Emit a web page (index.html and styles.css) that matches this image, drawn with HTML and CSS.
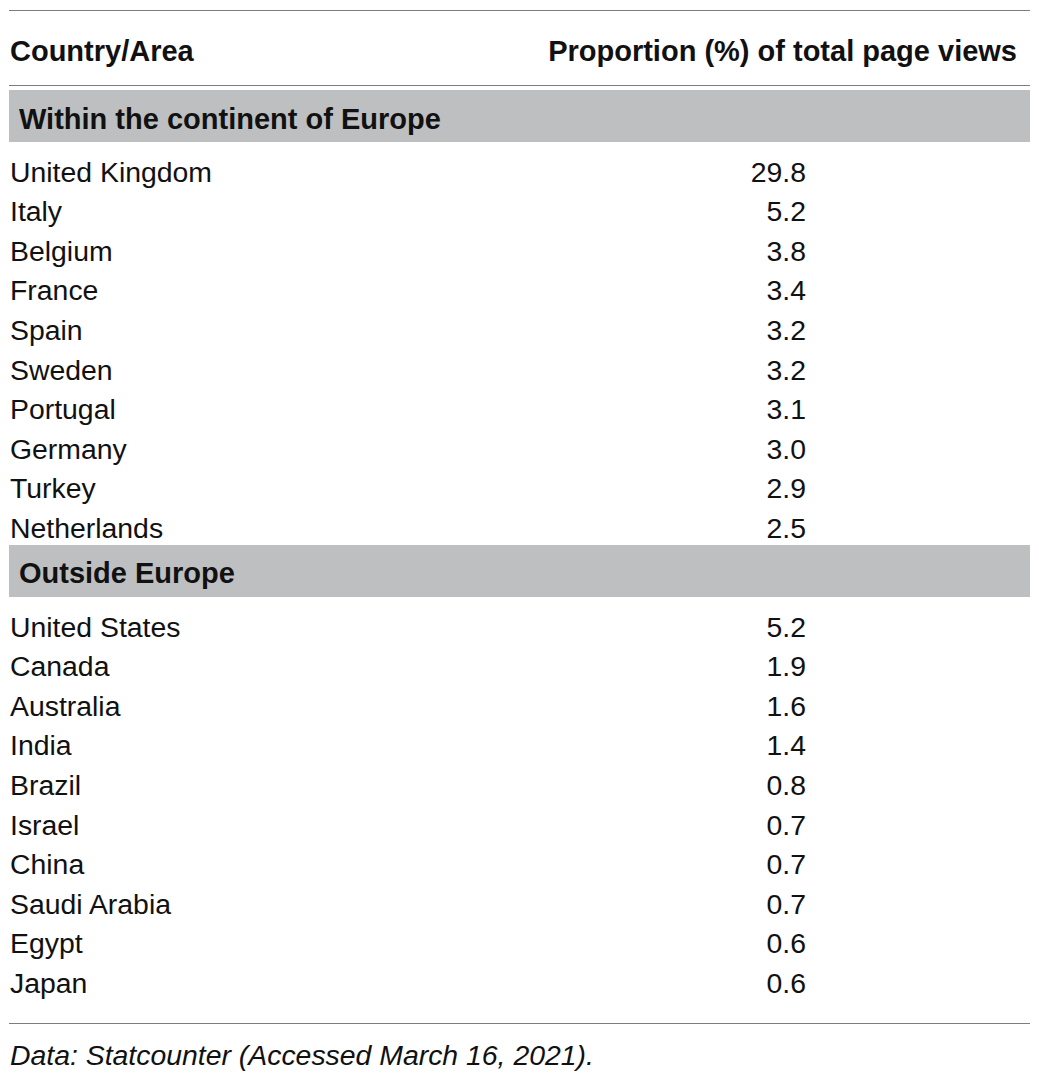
FILE: index.html
```html
<!DOCTYPE html>
<html lang="en">
<head>
<meta charset="utf-8">
<title>Page views by country</title>
<link rel="stylesheet" href="styles.css">
</head>
<body>
<div class="wrap">
  <div class="table">
    <div class="head">
      <div class="h-name">Country/Area</div>
      <div class="h-val">Proportion (%) of total page views</div>
    </div>
    <div class="band">Within the continent of Europe</div>
    <div class="group">
      <div class="row"><span class="name">United Kingdom</span><span class="val">29.8</span></div>
      <div class="row"><span class="name">Italy</span><span class="val">5.2</span></div>
      <div class="row"><span class="name">Belgium</span><span class="val">3.8</span></div>
      <div class="row"><span class="name">France</span><span class="val">3.4</span></div>
      <div class="row"><span class="name">Spain</span><span class="val">3.2</span></div>
      <div class="row"><span class="name">Sweden</span><span class="val">3.2</span></div>
      <div class="row"><span class="name">Portugal</span><span class="val">3.1</span></div>
      <div class="row"><span class="name">Germany</span><span class="val">3.0</span></div>
      <div class="row"><span class="name">Turkey</span><span class="val">2.9</span></div>
      <div class="row"><span class="name">Netherlands</span><span class="val">2.5</span></div>
    </div>
    <div class="band">Outside Europe</div>
    <div class="group last">
      <div class="row"><span class="name">United States</span><span class="val">5.2</span></div>
      <div class="row"><span class="name">Canada</span><span class="val">1.9</span></div>
      <div class="row"><span class="name">Australia</span><span class="val">1.6</span></div>
      <div class="row"><span class="name">India</span><span class="val">1.4</span></div>
      <div class="row"><span class="name">Brazil</span><span class="val">0.8</span></div>
      <div class="row"><span class="name">Israel</span><span class="val">0.7</span></div>
      <div class="row"><span class="name">China</span><span class="val">0.7</span></div>
      <div class="row"><span class="name">Saudi Arabia</span><span class="val">0.7</span></div>
      <div class="row"><span class="name">Egypt</span><span class="val">0.6</span></div>
      <div class="row"><span class="name">Japan</span><span class="val">0.6</span></div>
    </div>
  </div>
  <p class="note">Data: Statcounter (Accessed March 16, 2021).</p>
</div>
</body>
</html>
```

FILE: styles.css
```css
html, body {
  margin: 0;
  padding: 0;
  background: #ffffff;
}

body {
  font-family: "Liberation Sans", Arial, sans-serif;
  color: #111111;
  font-size: 28.4px;
}

.wrap {
  margin: 10px 9px 0 9px;
  width: 1021px;
}

.table {
  border-top: 1px solid #7d7d7d;
  border-bottom: 1px solid #7d7d7d;
}

.head {
  box-sizing: border-box;
  display: grid;
  grid-template-columns: 1fr auto;
  align-items: center;
  height: 75px;
  padding-top: 6px;
  border-bottom: 1px solid #7d7d7d;
  font-weight: bold;
  font-size: 29px;
  margin-bottom: 4px;
}

.h-name {
  padding-left: 1px;
}

.h-val {
  padding-right: 13px;
}

.band {
  box-sizing: border-box;
  background: #bebfc1;
  height: 52px;
  display: flex;
  align-items: center;
  padding: 6px 0 0 10px;
  font-weight: bold;
  font-size: 29px;
}

.group {
  padding-top: 10px;
  margin-bottom: -3px;
}

.group.last {
  margin-bottom: 0;
  padding-bottom: 20px;
}

.row {
  display: grid;
  grid-template-columns: 1fr auto;
  height: 39.6px;
  align-items: center;
  line-height: 1;
}

.name {
  padding-left: 1px;
}

.val {
  text-align: right;
  padding-right: 224px;
}

.note {
  margin: 0;
  padding: 15px 0 0 1px;
  font-style: italic;
}
```
